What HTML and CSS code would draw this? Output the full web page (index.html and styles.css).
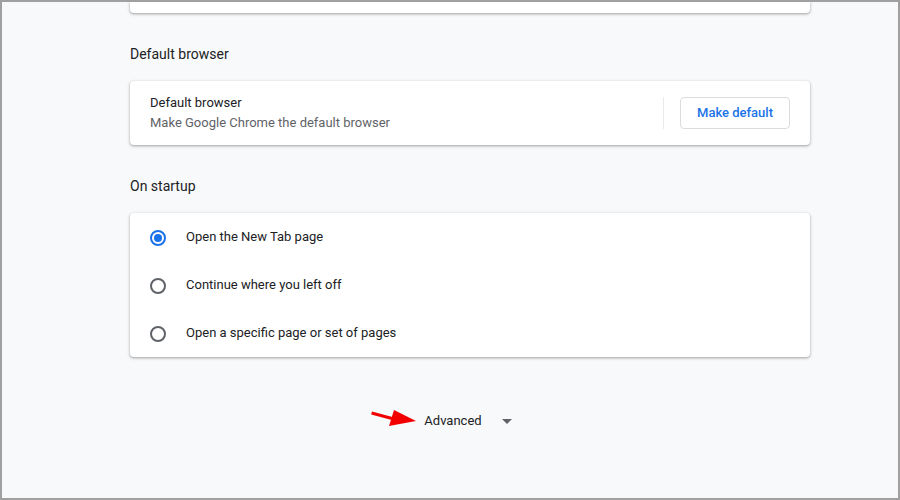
FILE: index.html
```html
<!DOCTYPE html>
<html>
<head>
<meta charset="utf-8">
<link rel="stylesheet" href="styles.css">
</head>
<body>
<div class="frame">
  <main class="column">
    <div class="card card-top"></div>

    <h2 class="section-title">Default browser</h2>
    <div class="card default-card">
      <div class="default-text">
        <div class="primary">Default browser</div>
        <div class="secondary">Make Google Chrome the default browser</div>
      </div>
      <div class="separator"></div>
      <button class="btn">Make default</button>
    </div>

    <h2 class="section-title">On startup</h2>
    <div class="card radio-card">
      <div class="radio-row">
        <span class="radio checked"></span>
        <span class="radio-label">Open the New Tab page</span>
      </div>
      <div class="radio-row">
        <span class="radio"></span>
        <span class="radio-label">Continue where you left off</span>
      </div>
      <div class="radio-row">
        <span class="radio"></span>
        <span class="radio-label">Open a specific page or set of pages</span>
      </div>
    </div>

    <div class="advanced-wrap">
      <div class="advanced">
        <svg class="red-arrow" width="50" height="22" viewBox="0 0 50 22">
          <path d="M2 3.5 L28 10.5 L27.2 13.5 L1.2 6.5 Z" fill="#f20000"/>
          <path d="M24 2 L46 13 L19 18 Z" fill="#f20000"/>
        </svg>
        <span class="advanced-label">Advanced</span>
        <svg class="drop" width="24" height="24" viewBox="0 0 24 24">
          <path d="M7 10l5 5 5-5z" fill="#5f6368"/>
        </svg>
      </div>
    </div>
  </main>
</div>
</body>
</html>
```

FILE: styles.css
```css
html, body {
  margin: 0;
  padding: 0;
}

body {
  font-family: Roboto, "Liberation Sans", Arial, sans-serif;
  color: #202124;
  font-size: 13px;
  line-height: 20px;
}

.frame {
  width: 900px;
  height: 500px;
  box-sizing: border-box;
  border: 2px solid #a0a0a0;
  background: #f8f9fa;
  overflow: hidden;
}

.column {
  width: 680px;
  margin-left: 128px;
  display: flex;
  flex-direction: column;
}

.card {
  background: #fff;
  border-radius: 4px;
  box-shadow: 0 1px 2px rgba(60, 64, 67, 0.3), 0 1px 3px 1px rgba(60, 64, 67, 0.15);
}

.card-top {
  height: 11px;
  border-radius: 0 0 4px 4px;
}

.section-title {
  margin: 31px 0 17px;
  font-size: 14px;
  font-weight: 400;
  line-height: 20px;
  color: #202124;
}

.default-card {
  display: flex;
  align-items: center;
  padding: 12px 20px;
  height: 40px;
}

.default-text {
  flex: 1;
}

.primary {
  color: #202124;
}

.secondary {
  color: #5f6368;
}

.separator {
  width: 1px;
  height: 32px;
  background: #e8eaed;
  margin: 0 16px 0 0;
}

.btn {
  font-family: inherit;
  font-size: 13px;
  font-weight: 500;
  color: #1a73e8;
  background: #fff;
  border: 1px solid #dadce0;
  border-radius: 4px;
  height: 32px;
  padding: 0 16px;
  line-height: 30px;
}

.radio-card {
  display: flex;
  flex-direction: column;
}

.radio-row {
  height: 48px;
  display: flex;
  align-items: center;
  padding: 0 20px;
}

.radio {
  box-sizing: border-box;
  width: 16px;
  height: 16px;
  border: 2px solid #5f6368;
  border-radius: 50%;
  margin-right: 20px;
  margin-top: 2px;
  display: flex;
  align-items: center;
  justify-content: center;
}

.radio.checked {
  border-color: #1a73e8;
}

.radio.checked::after {
  content: "";
  width: 8px;
  height: 8px;
  border-radius: 50%;
  background: #1a73e8;
}

.radio-label {
  color: #202124;
}

.advanced-wrap {
  margin-top: 44px;
  display: flex;
  justify-content: center;
}

.advanced {
  position: relative;
  height: 40px;
  display: flex;
  align-items: center;
  padding-left: 3px;
}

.advanced-label {
  color: #202124;
  margin-right: 13px;
}

.drop {
  display: block;
}

.red-arrow {
  position: absolute;
  left: -51px;
  top: 7px;
}
```
